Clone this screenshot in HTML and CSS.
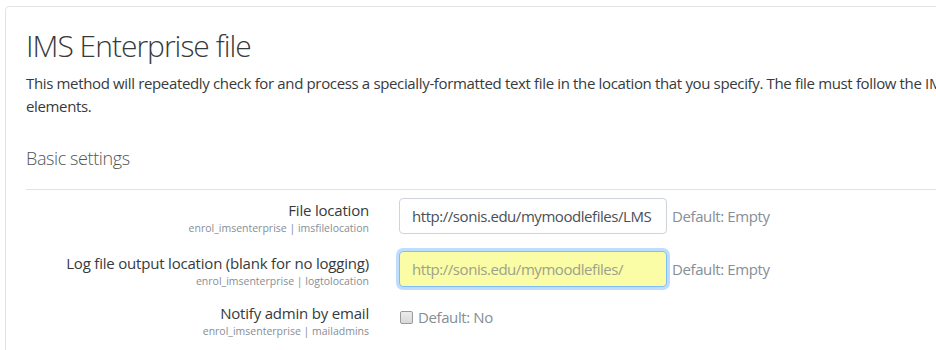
FILE: index.html
```html
<!DOCTYPE html>
<html lang="en">
<head>
<meta charset="utf-8">
<title>IMS Enterprise file</title>
<link rel="stylesheet" href="styles.css">
</head>
<body>
<div class="card">
  <h2 class="title">IMS Enterprise file</h2>
  <p class="intro">This method will repeatedly check for and process a specially-formatted text file in the location that you specify. The file must follow the IMS Enterprise specification containing person, group, and membership XML<br>elements.</p>
  <h3 class="section">Basic settings</h3>
  <div class="rule"></div>
  <div class="setting">
    <div class="label-col">
      <label class="label" for="f1">File location</label>
      <span class="key">enrol_imsenterprise | imsfilelocation</span>
    </div>
    <div class="field-col">
      <input id="f1" class="text-input" type="text" value="http://sonis.edu/mymoodlefiles/LMS">
      <span class="default">Default: Empty</span>
    </div>
  </div>
  <div class="setting setting-tight">
    <div class="label-col">
      <label class="label" for="f2">Log file output location (blank for no logging)</label>
      <span class="key">enrol_imsenterprise | logtolocation</span>
    </div>
    <div class="field-col">
      <input id="f2" class="text-input focused" type="text" placeholder="http://sonis.edu/mymoodlefiles/">
      <span class="default">Default: Empty</span>
    </div>
  </div>
  <div class="setting">
    <div class="label-col">
      <label class="label" for="f3">Notify admin by email</label>
      <span class="key">enrol_imsenterprise | mailadmins</span>
    </div>
    <div class="field-col check-col">
      <input id="f3" class="checkbox" type="checkbox">
      <span class="default">Default: No</span>
    </div>
  </div>
</div>
</body>
</html>
```

FILE: styles.css
```css
html, body {
  margin: 0;
  padding: 0;
  background: #ffffff;
  overflow: hidden;
}

body {
  font-family: "Open Sans", "Noto Sans", sans-serif;
  color: #373a3c;
  font-size: 15px;
  letter-spacing: -0.3px;
}

.card {
  margin: 6px 0 0 5px;
  width: 1400px;
  height: 400px;
  border: 1px solid #e3e3e3;
  border-radius: 4px 0 0 0;
  padding: 0 20px;
  box-sizing: border-box;
}

.title {
  margin: 21px 0 0 0;
  font-size: 30px;
  font-weight: 300;
  line-height: 36px;
  letter-spacing: -1px;
  color: #373a3c;
}

.intro {
  margin: 8px 0 0 0;
  font-size: 15px;
  line-height: 22.5px;
  letter-spacing: -0.35px;
  white-space: nowrap;
  color: #373a3c;
}

.section {
  margin: 29px 0 0 0;
  font-size: 18px;
  font-weight: 300;
  line-height: 24px;
  letter-spacing: -0.4px;
  color: #555;
}

.rule {
  margin-top: 19px;
  height: 1px;
  background: #e3e3e3;
}

.setting {
  display: grid;
  grid-template-columns: 343px auto;
  column-gap: 30px;
  margin-top: 8px;
  margin-bottom: 16px;
}

.setting + .setting {
  margin-top: 0;
}

.setting-tight {
  margin-bottom: 13px;
}

.label-col {
  display: flex;
  flex-direction: column;
  align-items: flex-end;
  padding-top: 1px;
}

.label {
  font-size: 15px;
  line-height: 22px;
  letter-spacing: -0.2px;
  color: #373a3c;
}

.key {
  font-size: 10.5px;
  line-height: 14px;
  letter-spacing: 0;
  color: #868e96;
}

.field-col {
  display: flex;
  align-items: center;
  align-self: start;
  gap: 5px;
}

.text-input {
  width: 268px;
  height: 36px;
  box-sizing: border-box;
  border: 1px solid #ced4da;
  border-radius: 4px;
  padding: 6px 12px;
  font-family: inherit;
  font-size: 15px;
  letter-spacing: -0.45px;
  color: #495057;
  background: #fff;
  outline: none;
}

.text-input.focused {
  background: #fafca6;
  border-color: #80bdff;
  box-shadow: 0 0 0 3px rgba(0, 123, 255, 0.25);
}

.text-input::placeholder {
  color: #9ca28a;
  opacity: 1;
}

.default {
  font-size: 15px;
  letter-spacing: -0.4px;
  color: #868e96;
  white-space: nowrap;
}

.check-col {
  padding-top: 6px;
}

.checkbox {
  appearance: none;
  -webkit-appearance: none;
  margin: 0 0 0 1px;
  width: 13px;
  height: 13px;
  border: 1px solid #9a9a9a;
  border-radius: 2px;
  background: linear-gradient(#ececec, #d8d8d8);
}
```
